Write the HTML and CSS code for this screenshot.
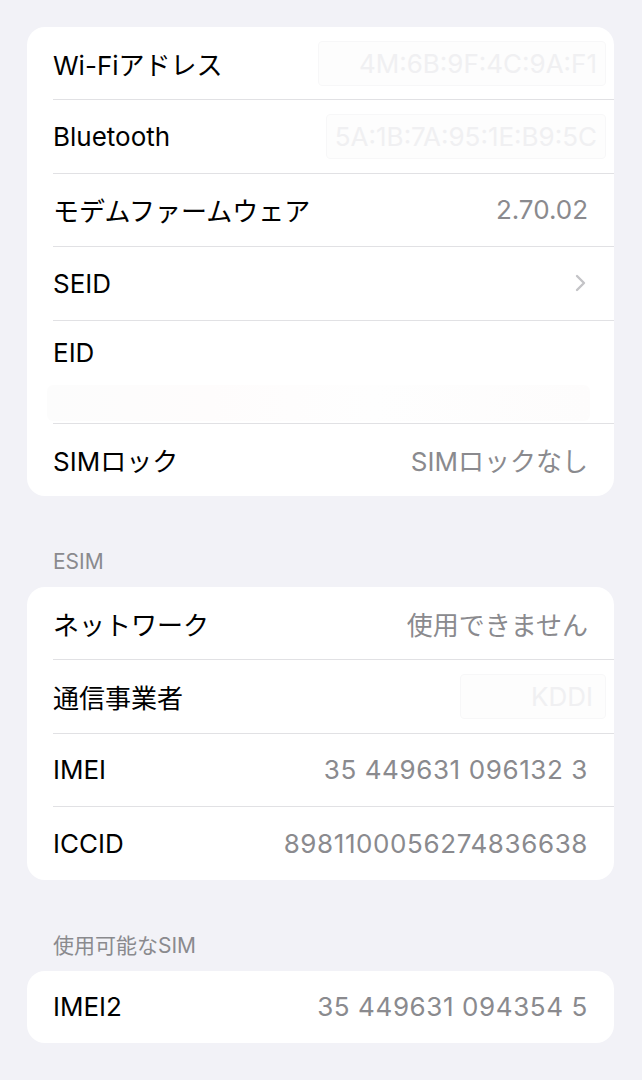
FILE: index.html
```html
<!DOCTYPE html>
<html lang="ja">
<head>
    <meta charset="UTF-8">
    <title>情報</title>
    <link rel="stylesheet" href="styles.css">
</head>
<body>
<div class="page">

    <div class="card">
        <div class="row">
            <span class="label">Wi-Fiアドレス</span>
            <span class="hidden hidden-wifi">4M:6B:9F:4C:9A:F1</span>
        </div>
        <div class="row">
            <span class="label">Bluetooth</span>
            <span class="hidden hidden-bt">5A:1B:7A:95:1E:B9:5C</span>
        </div>
        <div class="row">
            <span class="label">モデムファームウェア</span>
            <span class="value">2.70.02</span>
        </div>
        <div class="row">
            <span class="label">SEID</span>
            <svg class="chevron" width="12" height="18" viewBox="0 0 12 18">
                <polyline points="2,2 9,9 2,16" fill="none" stroke="#c4c4c7" stroke-width="2.4" stroke-linecap="round" stroke-linejoin="round"/>
            </svg>
        </div>
        <div class="row row-eid">
            <span class="label eid-label">EID</span>
            <div class="eid-blur"></div>
        </div>
        <div class="row">
            <span class="label">SIMロック</span>
            <span class="value">SIMロックなし</span>
        </div>
    </div>

    <h2 class="section">ESIM</h2>
    <div class="card">
        <div class="row">
            <span class="label">ネットワーク</span>
            <span class="value">使用できません</span>
        </div>
        <div class="row">
            <span class="label">通信事業者</span>
            <span class="hidden hidden-carrier">KDDI</span>
        </div>
        <div class="row">
            <span class="label">IMEI</span>
            <span class="value num">35 449631 096132 3</span>
        </div>
        <div class="row">
            <span class="label">ICCID</span>
            <span class="value num">8981100056274836638</span>
        </div>
    </div>

    <h2 class="section">使用可能なSIM</h2>
    <div class="card">
        <div class="row">
            <span class="label">IMEI2</span>
            <span class="value num">35 449631 094354 5</span>
        </div>
    </div>

</div>
</body>
</html>
```

FILE: styles.css
```css
body {
    margin: 0;
    background-color: #f2f2f7;
    font-family: Inter, "Noto Sans CJK JP", sans-serif;
    color: #000;
}
.page {
    padding: 27px 28px 0 27px;
}
.card {
    background-color: #fff;
    border-radius: 18px;
    overflow: hidden;
}
.row {
    display: flex;
    align-items: center;
    justify-content: space-between;
    min-height: 72.4px;
    margin-left: 26px;
    padding-right: 26px;
    border-bottom: 1px solid #e1e1e4;
}
.row:last-child {
    border-bottom: none;
}
.label {
    font-size: 26px;
}
.value {
    font-size: 26px;
    color: #8a8a8e;
}
.num {
    letter-spacing: 0.6px;
}
.chevron {
    margin-right: 1px;
}
.hidden {
    font-size: 26px;
    color: #f0f0f2;
    background-color: #fdfdfd;
    border: 1px solid #f7f7f8;
    border-radius: 4px;
    padding: 6px 8px;
    margin-right: -18px;
}
.hidden-wifi {
    padding-left: 40px;
}
.hidden-carrier {
    padding-left: 70px;
    padding-right: 12px;
}
.row-eid {
    flex-direction: column;
    align-items: stretch;
    min-height: 102px;
}
.eid-label {
    line-height: 64px;
}
.eid-blur {
    height: 36px;
    margin: 0 -2px 2px -6px;
    border-radius: 6px;
    background: linear-gradient(90deg, #fcfcfc 0%, #fefcfc 30%, #fefefe 60%, #fdfcfc 100%);
}
.section {
    margin: 54px 0 13px 26px;
    font-size: 21px;
    line-height: 24px;
    font-weight: normal;
    color: #8a8a8e;
}
```
